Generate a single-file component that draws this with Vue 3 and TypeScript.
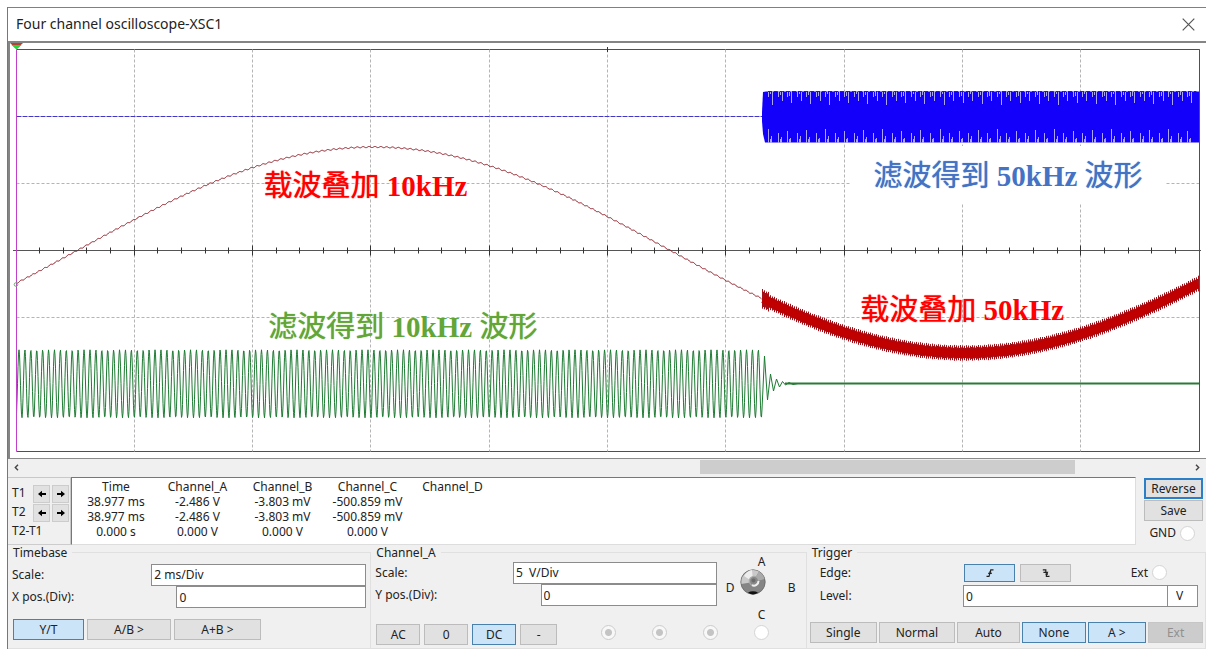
<script setup lang="ts">
import { ref } from 'vue'

interface Readout {
  name: string
  t1: string
  t2: string
  diff: string
}

const readouts: Readout[] = [
  { name: 'Time', t1: '38.977 ms', t2: '38.977 ms', diff: '0.000 s' },
  { name: 'Channel_A', t1: '-2.486 V', t2: '-2.486 V', diff: '0.000 V' },
  { name: 'Channel_B', t1: '-3.803 mV', t2: '-3.803 mV', diff: '0.000 V' },
  { name: 'Channel_C', t1: '-500.859 mV', t2: '-500.859 mV', diff: '0.000 V' },
  { name: 'Channel_D', t1: '', t2: '', diff: '' },
]
const rows: (keyof Readout)[] = ['t1', 't2', 'diff']

const display = ref('Y/T')
const displayModes = ['Y/T', 'A/B >', 'A+B >']
const coupling = ref('DC')
const couplings = ['AC', '0', 'DC', '-']
const trigger = ref('None')
const triggerModes = ['Single', 'Normal', 'Auto', 'None']
const edge = ref('rising')
const xPos = ref('0')
const yPos = ref('0')
const level = ref('0')
const timeScale = ref('2 ms/Div')
const voltScale = ref('5 \u00a0V/Div')

/* Plot area in drawing units */
const left = 16.5
const right = 1199.5
const top = 49.5
const bottom = 451.5
const mid = 250.5
const burst = 762

const columns = Array.from({ length: 9 }, (_, i) => Math.round(left + 118.3 * (i + 1)) - 0.5)
const gridRows = [183.5, 317.5]
const ticks = Array.from({ length: 49 }, (_, i) => {
  const n = i + 1
  const size = n % 5 === 0 ? 5 : 3
  const x = Math.round(left + 23.66 * n) - 0.5
  return `M${x} ${mid - size}V${mid + size}`
}).join('')

const carrier = (x: number): number => 250 - 103 * Math.sin(((x - 78) / 1183) * 2 * Math.PI)
const jitter = (n: number): number => ((n * 7919 + 31) % 17) / 17

function path(from: number, to: number, step: number, f: (x: number, n: number) => number): string {
  const points: string[] = []
  let n = 0
  for (let x = from; x <= to; x += step) {
    points.push(`${x.toFixed(1)} ${f(x, n).toFixed(1)}`)
    n++
  }
  return 'M' + points.join('L')
}

const redLine = path(left, burst, 1, (x) => carrier(x) + 0.6 * Math.sin(((x - left) / 5.9) * 2 * Math.PI))
const redCore = path(burst + 1, right, 3, (x) => carrier(x))
const redFringe = (() => {
  let d = ''
  let n = 0
  for (let x = burst + 0.5; x < right; x += 1) {
    const boost = n < 7 ? 2 : 0
    const reach = (n % 2 ? 5 : 7) + jitter(n) + boost
    d += `M${x} ${(carrier(x) - reach).toFixed(1)}V${(carrier(x) + reach).toFixed(1)}`
    n++
  }
  return d
})()

const greenWave =
  path(left, burst, 0.5, (x) => 383.8 - 34 * Math.sin(((x - left - 1) / 5.915) * 2 * Math.PI)) +
  'L764.5 356L767.5 400L770.5 374L773.5 391L776.5 379L779.5 387L782.5 381.5L785.5 385L789 382.5L793 384.5L798 383.5'

const blueBody = `M762 112V121L763 134L765 142.5H${right}V91.5H766L763 92Z`
const notches = (() => {
  let upper = ''
  let lower = ''
  let n = 0
  for (let x = 763; x < 1189; x += 9.53) {
    const a = Math.round(x) + 0.5
    const deep = n % 2 ? 10 : 14 - (n % 3)
    upper += `M${a + 9} 91V${91 + deep}M${a + 5} 91V97M${a + 7} 91V${94 + (n % 3)}`
    lower += `M${a + 5} 143V${143 - deep}M${a + 8} 143V${136 + (n % 3)}M${a + 7} 143V139`
    n++
  }
  return { upper, lower }
})()
const blueEdge = path(768, right, 4.76, () => 91.5)
</script>

<template>
  <main class="window">
    <header class="titlebar">
      <h1>Four channel oscilloscope-XSC1</h1>
      <button class="close" type="button" aria-label="Close">
        <svg width="13" height="13" viewBox="0 0 13 13"><path d="M.7.7 12.3 12.3M12.3.7.7 12.3" /></svg>
      </button>
    </header>

    <section class="scope" aria-label="Waveforms">
      <svg class="plot" viewBox="10 43 1196 415" preserveAspectRatio="none">
        <path class="frame" :d="`M${left} ${top}H${right}V${bottom}H${left}`" />
        <g class="grid">
          <path v-for="x in columns" :key="x" :d="`M${x} ${top}V${bottom}`" />
          <path v-for="y in gridRows" :key="y" :d="`M${left} ${y}H${right}`" />
        </g>
        <rect class="blank" x="850" y="146" width="316" height="58" />
        <path class="axis" :d="`M13 ${mid}H1201`" />
        <path class="tick" :d="ticks + 'M607.5 47V52'" />
        <path class="green" :d="greenWave" />
        <path class="green-flat" :d="`M785 383.5H${right}`" />
        <path class="blue-line" :d="`M${left} 116.5H${burst}`" />
        <path class="blue-body" :d="blueBody" />
        <path class="notch" :d="notches.upper" />
        <path class="notch" :d="notches.lower" />
        <path class="blue-edge" :d="blueEdge" />
        <path class="red-line" :d="redLine" />
        <path class="red-fringe" :d="redFringe" />
        <path class="red-core" :d="redCore" />
        <path class="frame" :d="`M${right} ${top}V${bottom}`" />
        <path class="cursor" :d="`M${left} ${top}V${bottom}`" />
        <circle class="origin" cx="16" cy="284.5" r="1.8" />
        <path d="M10 43H23L16.5 49Z" fill="#b5432f" />
        <path d="M11.5 45H21.5L16.5 49.5Z" fill="#22d83a" />
      </svg>
      <p class="note red-a">载波叠加 <b>10kHz</b></p>
      <p class="note blue">滤波得到 <b>50kHz</b> 波形</p>
      <p class="note lime">滤波得到 <b>10kHz</b> 波形</p>
      <p class="note red-b">载波叠加 <b>50kHz</b></p>
    </section>

    <div class="scrollbar">
      <button type="button" aria-label="Scroll left">
        <svg width="5" height="7" viewBox="0 0 5 7"><path d="M4 .8 1.3 3.5 4 6.2" /></svg>
      </button>
      <div class="track"><div class="thumb"></div></div>
      <button type="button" aria-label="Scroll right">
        <svg width="5" height="7" viewBox="0 0 5 7"><path d="M1 .8 3.7 3.5 1 6.2" /></svg>
      </button>
    </div>

    <section class="measure">
      <div class="cursors">
        <div v-for="t in ['T1', 'T2']" :key="t" class="cursor-row">
          <span>{{ t }}</span>
          <button type="button" :aria-label="t + ' left'">
            <svg width="8" height="8" viewBox="0 0 8 8"><path d="M0 4 4 .8V3H8V5H4V7.2Z" /></svg>
          </button>
          <button type="button" :aria-label="t + ' right'">
            <svg width="8" height="8" viewBox="0 0 8 8"><path d="M8 4 4 .8V3H0V5H4V7.2Z" /></svg>
          </button>
        </div>
        <div class="cursor-row last"><span>T2-T1</span></div>
      </div>
      <div class="readout">
        <table>
          <thead>
            <tr><th v-for="r in readouts" :key="r.name" scope="col">{{ r.name }}</th></tr>
          </thead>
          <tbody>
            <tr v-for="row in rows" :key="row">
              <td v-for="r in readouts" :key="r.name">{{ r[row] }}</td>
            </tr>
          </tbody>
        </table>
      </div>
      <div class="actions">
        <button class="btn focus" type="button">Reverse</button>
        <button class="btn" type="button">Save</button>
        <label class="radio-label">GND <input type="radio" name="gnd" /></label>
      </div>
    </section>

    <div class="panels">
      <fieldset class="panel timebase">
        <legend>Timebase</legend>
        <div class="fields">
          <label for="time-scale">Scale:</label>
          <select id="time-scale" v-model="timeScale" class="box scale"><option>2 ms/Div</option></select>
          <label for="x-pos">X pos.(Div):</label>
          <input id="x-pos" v-model="xPos" class="box pos" type="text" />
        </div>
        <div class="buttons">
          <button
            v-for="m in displayModes"
            :key="m"
            type="button"
            class="btn"
            :class="{ on: m === display }"
            @click="display = m"
          >{{ m }}</button>
        </div>
      </fieldset>

      <fieldset class="panel channel">
        <legend>Channel_A</legend>
        <div class="channel-body">
          <div class="fields">
            <label for="volt-scale">Scale:</label>
            <select id="volt-scale" v-model="voltScale" class="box scale">
              <option :value="voltScale">{{ voltScale }}</option>
            </select>
            <label for="y-pos">Y pos.(Div):</label>
            <input id="y-pos" v-model="yPos" class="box pos" type="text" />
          </div>
          <div class="dial">
            <span class="n">A</span>
            <span class="w">D</span>
            <button class="knob" type="button" aria-label="Channel selector">
              <svg width="26" height="26" viewBox="0 0 26 26">
                <circle cx="13" cy="13" r="12.2" fill="#858585" stroke="#666" stroke-width=".8" />
                <path d="M1.5 15A12 12 0 0 1 19 2.6L13 13Z" fill="#c9c9c9" />
                <path d="M4 7A12 12 0 0 1 12 1L13 13Z" fill="#ededed" />
                <path d="M19 2.6A12 12 0 0 1 24.6 10L13 13Z" fill="#aaa" />
                <path d="M8 23.6Q13 21 18 23.6Q13 27.4 8 23.6Z" fill="#111" />
                <circle cx="14" cy="12" r="4.6" fill="#888" stroke="#aaa" stroke-width="1.4" />
                <path d="M18.5 12A4.6 4.6 0 0 1 12 16.2" fill="none" stroke="#eee" stroke-width="2" />
                <circle cx="13.5" cy="11.5" r="2" fill="#6c6c6c" />
              </svg>
            </button>
            <span class="e">B</span>
            <span class="s">C</span>
          </div>
        </div>
        <div class="buttons">
          <button
            v-for="c in couplings"
            :key="c"
            type="button"
            class="btn"
            :class="{ on: c === coupling }"
            @click="coupling = c"
          >{{ c }}</button>
          <div class="radios">
            <input type="radio" name="ch-a" checked disabled aria-label="Channel A" />
            <input type="radio" name="ch-b" checked disabled aria-label="Channel B" />
            <input type="radio" name="ch-c" checked disabled aria-label="Channel C" />
            <input type="radio" name="ch-d" aria-label="Channel D" />
          </div>
        </div>
      </fieldset>

      <fieldset class="panel trigger">
        <legend>Trigger</legend>
        <div class="trigger-row edge">
          <span class="name">Edge:</span>
          <button type="button" class="btn" :class="{ on: edge === 'rising' }" aria-label="Rising edge" @click="edge = 'rising'">
            <svg width="8" height="8" viewBox="0 0 8 8"><path d="M.5 7.3H3L4.8.8H7.5M2.2 4.3H5.8M3.2 3H5.2" /></svg>
          </button>
          <button type="button" class="btn" :class="{ on: edge === 'falling' }" aria-label="Falling edge" @click="edge = 'falling'">
            <svg width="8" height="8" viewBox="0 0 8 8"><path d="M.8.8H3.8V3.4M1.4 3.4H5.4L4.4 5.2V7.3H7.5M3.4 5.2H6" /></svg>
          </button>
          <label class="radio-label">Ext <input type="radio" name="ext" /></label>
        </div>
        <div class="trigger-row">
          <label class="name" for="level">Level:</label>
          <input id="level" v-model="level" class="box level" type="text" />
          <select class="box unit" aria-label="Level unit"><option>V</option></select>
        </div>
        <div class="buttons">
          <button
            v-for="m in triggerModes"
            :key="m"
            type="button"
            class="btn"
            :class="{ on: m === trigger }"
            @click="trigger = m"
          >{{ m }}</button>
          <button type="button" class="btn on">A &gt;</button>
          <button type="button" class="btn" disabled>Ext</button>
        </div>
      </fieldset>
    </div>
  </main>
</template>

<style>
body {
  margin: 0;
  background: #fff;
}
</style>

<style scoped>
* {
  box-sizing: border-box;
}
.window {
  margin: 7px 0 0 7px;
  border-left: 1px solid #777;
  border-top: 1px solid #808080;
  background: #f0f0f0;
  color: #222;
  font: 12px/16px 'Noto Sans', 'Noto Sans CJK SC', sans-serif;
}
button,
input,
select {
  margin: 0;
  padding: 0;
  border-radius: 0;
  color: inherit;
  font: inherit;
}
.titlebar {
  display: flex;
  align-items: center;
  justify-content: space-between;
  height: 33px;
  padding: 0 11px 1px 8px;
  background: #fff;
}
h1 {
  margin: 0;
  font-size: 14px;
  font-weight: 400;
  line-height: 20px;
}
.close {
  display: flex;
  padding: 0;
  border: 0;
  background: none;
}
.close path {
  fill: none;
  stroke: #555;
  stroke-width: 1.2;
}
.scope {
  position: relative;
  border-top: 2px solid #858585;
  border-left: 2px solid #858585;
  border-bottom: 1px solid #8a8a8a;
  background: #fff;
}
.plot {
  display: block;
  width: 100%;
  height: 415px;
}
.plot path {
  vector-effect: non-scaling-stroke;
}
.frame {
  fill: none;
  stroke: #505050;
}
.grid path {
  stroke: #b4b4b4;
  stroke-dasharray: 3 2;
}
.blank {
  fill: #fff;
}
.axis {
  stroke: #555;
}
.tick {
  stroke: #333;
}
.green {
  fill: none;
  stroke: #1d7a32;
}
.green-flat {
  stroke: #2a7a36;
  stroke-width: 2;
}
.blue-line {
  stroke: #4338c4;
  stroke-dasharray: 5 1;
}
.blue-body {
  fill: #1200fa;
}
.blue-edge {
  fill: none;
  stroke: #2a1e9c;
  stroke-dasharray: 4 2;
}
.notch {
  stroke: #aaa6f4;
}
.red-line {
  fill: none;
  stroke: #8f1c26;
}
.red-fringe {
  fill: none;
  stroke: #a01018;
}
.red-core {
  fill: none;
  stroke: #c00000;
  stroke-width: 8;
}
.cursor {
  stroke: #c040c8;
}
.origin {
  fill: none;
  stroke: #69b56c;
}
.note {
  position: absolute;
  margin: 0;
  font: 29px/36px 'Liberation Serif', 'Noto Sans CJK SC', serif;
  text-shadow: 0 0 1px currentColor;
  white-space: nowrap;
}
.note b {
  text-shadow: none;
}
.red-a {
  left: 21.2%;
  top: 30%;
  color: #f00;
}
.blue {
  left: 72.2%;
  top: 27.6%;
  color: #4472c4;
}
.lime {
  left: 21.6%;
  top: 64%;
  color: #63a537;
}
.red-b {
  left: 71.1%;
  top: 60%;
  color: #f00;
}
.scrollbar {
  display: flex;
  height: 18px;
  padding: 1px 0 3px;
}
.scrollbar button {
  display: flex;
  align-items: center;
  justify-content: center;
  width: 17px;
  border: 0;
  background: none;
}
.scrollbar path {
  fill: none;
  stroke: #444;
  stroke-width: 1.4;
}
.track {
  flex: 1;
}
.thumb {
  width: 32.2%;
  height: 100%;
  margin-left: 58%;
  background: #cdcdcd;
}
.measure {
  display: flex;
  height: 68px;
}
.cursors {
  width: 63px;
  padding: 7px 1px 0 4px;
  border-top: 1px solid #c8c8c8;
  border-right: 1px solid #c8c8c8;
  border-bottom: 1px solid #ccc;
}
.cursor-row {
  display: flex;
  gap: 2px;
  height: 19px;
}
.cursor-row span {
  flex: 1;
}
.cursor-row button {
  display: flex;
  align-items: center;
  justify-content: center;
  width: 17px;
  height: 18px;
  border: 1px solid #ccc;
  background: #e1e1e1;
}
.cursor-row path {
  fill: #000;
}
.readout {
  flex: 1;
  border-top: 1px solid #777;
  border-left: 1px solid #777;
  border-right: 1px solid #ddd;
  border-bottom: 1px solid #ddd;
  background: #fff;
}
table {
  margin: 1px 0 0 5px;
  border-collapse: collapse;
  table-layout: fixed;
  width: 418px;
}
th,
td {
  width: 85px;
  height: 15px;
  padding: 0;
  font-weight: 400;
  line-height: 15px;
  text-align: center;
}
th:first-child,
td:first-child {
  width: 78px;
}
.actions {
  display: flex;
  flex-direction: column;
  gap: 1px;
  width: 70px;
  padding: 1px 3px 0 8px;
}
.btn {
  height: 21px;
  border: 1px solid #bcbcbc;
  background: #e1e1e1;
  line-height: 16px;
  text-align: center;
}
.btn.focus {
  border: 2px solid #2a7fc8;
}
.btn.on {
  border-color: #4a80ac;
  background: #cce4f7;
}
.btn:disabled {
  border-color: #c6c6c6;
  background: #ccc;
  color: #909090;
}
.radio-label {
  display: flex;
  align-items: center;
  gap: 4px;
}
.actions .radio-label {
  justify-content: flex-end;
  height: 22px;
  padding-right: 8px;
}
input[type='radio'] {
  appearance: none;
  width: 15px;
  height: 15px;
  border: 1px solid #d4d4d4;
  border-radius: 50%;
  background: #fff;
}
input[type='radio']:disabled {
  border-color: #ccc;
  background: radial-gradient(circle, #c4c4c4 0 3px, #f8f8f8 4px);
}
.panels {
  display: grid;
  grid-template-columns: 363fr 435fr 399fr;
}
.panel {
  display: flex;
  flex-direction: column;
  min-width: 0;
  height: 104px;
  margin: 0;
  padding: 0;
  border: 1px solid #e0e0e0;
  border-left: 0;
}
legend {
  height: 15px;
  padding: 0 5px;
  line-height: 15px;
}
.fields {
  display: grid;
  grid-template-columns: 1fr;
  grid-auto-rows: 22px;
  align-items: center;
}
.fields label {
  grid-column: 1;
  padding-left: 4px;
}
.box {
  appearance: none;
  height: 22px;
  border: 1px solid #8c8c8c;
  background: #fff;
  color: #222;
  padding: 0 2px;
}
.fields .box {
  grid-column: 1;
  justify-self: end;
}
.fields label:nth-of-type(1),
.fields .scale {
  grid-row: 1;
}
.fields label:nth-of-type(2),
.fields .pos {
  grid-row: 2;
}
.timebase .fields {
  padding: 4px 4px 0 0;
}
.timebase .scale {
  width: 60%;
}
.timebase .pos {
  width: 53%;
}
.buttons {
  display: flex;
  gap: 3px;
}
.timebase .buttons {
  padding: 11px 0 0 5px;
}
.timebase .btn {
  width: 87px;
}
.timebase .btn:first-child {
  width: 71px;
}
.timebase .btn:nth-child(2) {
  width: 84px;
}
.channel-body {
  display: flex;
}
.channel .fields {
  flex: 1;
  padding-top: 2px;
}
.channel .scale {
  width: 59%;
}
.channel .pos {
  width: 51%;
}
.dial {
  display: grid;
  grid-template-columns: 16px 26px 40px;
  grid-template-rows: 12px 28px 25px;
  align-items: center;
  width: 89px;
  height: 65px;
  margin-top: -4px;
  padding-left: 7px;
  line-height: 12px;
}
.dial .n,
.dial .s {
  grid-column: 2;
  padding-left: 18px;
}
.dial .n {
  grid-row: 1;
}
.dial .s {
  grid-row: 3;
  align-self: end;
}
.dial .w {
  grid-row: 2;
  padding: 12px 0 0 2px;
}
.dial .e {
  grid-row: 2;
  padding: 12px 0 0 22px;
}
.knob {
  display: flex;
  grid-row: 2;
  grid-column: 2;
  border: 0;
  background: none;
}
.channel .buttons {
  gap: 4px;
  padding: 3px 0 0 5px;
}
.channel .btn {
  width: 44px;
}
.channel .btn:nth-child(4) {
  width: 37px;
}
.radios {
  display: flex;
  flex: 1;
  justify-content: space-between;
  padding: 1px 37px 0 40px;
}
.trigger-row {
  display: flex;
  align-items: center;
  height: 22px;
  padding: 0 7px 0 13px;
}
.trigger-row.edge {
  height: 25px;
  gap: 5px;
}
.name {
  flex: 1;
}
.edge .btn {
  display: flex;
  align-items: center;
  justify-content: center;
  width: 51px;
  height: 18px;
}
.edge path {
  fill: none;
  stroke: #222;
  stroke-width: 1.2;
}
.edge .radio-label {
  width: 122px;
  justify-content: flex-end;
  padding-right: 31px;
}
.level {
  width: 205px;
}
.unit {
  width: 31px;
  margin-left: -1px;
  padding-left: 8px;
}
.trigger .buttons {
  gap: 2px;
  padding: 15px 2px 0 3px;
}
.trigger .btn {
  flex: 68 1 0;
}
.trigger .buttons .btn:nth-child(2) {
  flex-grow: 77;
}
.trigger .buttons .btn:nth-child(3),
.trigger .buttons .btn:nth-child(4) {
  flex-grow: 64;
}
.trigger .buttons .btn:nth-child(5) {
  flex-grow: 59;
}
.trigger .buttons .btn:nth-child(6) {
  flex-grow: 55;
}
.edge .btn.btn {
  flex: none;
}
</style>
